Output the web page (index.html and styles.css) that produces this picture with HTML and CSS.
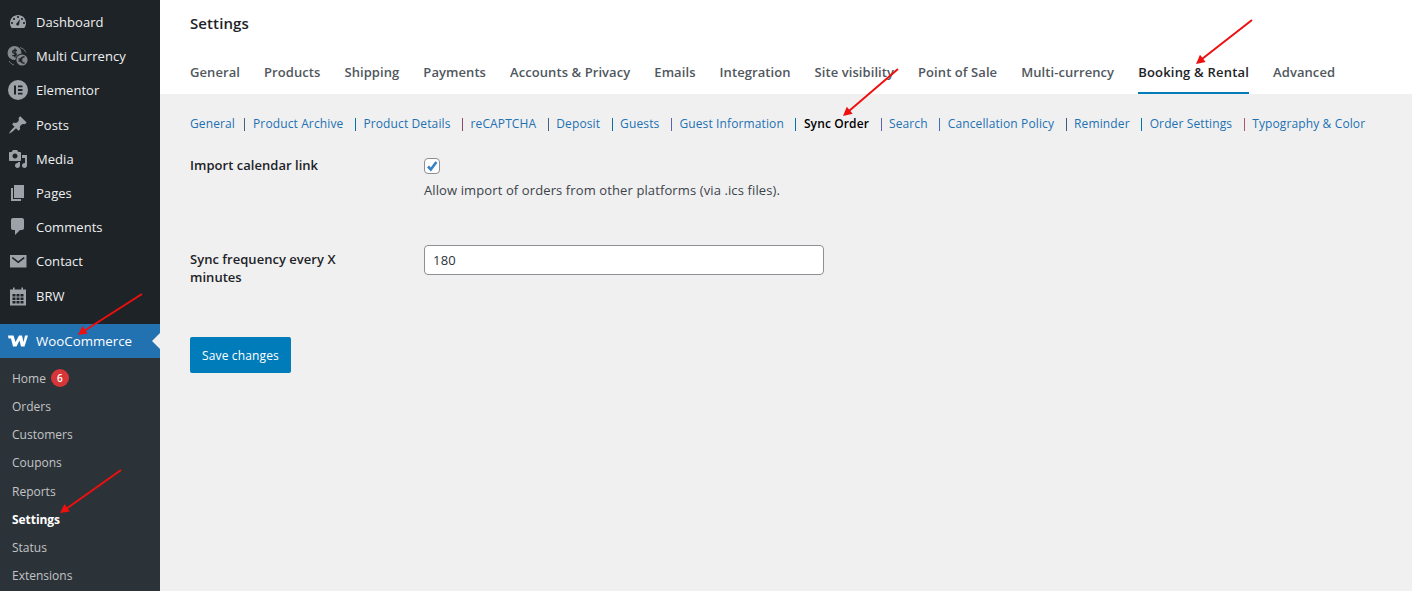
FILE: index.html
```html
<!DOCTYPE html>
<html lang="en">
<head>
<meta charset="utf-8">
<title>Settings</title>
<link rel="stylesheet" href="styles.css">
</head>
<body>
<div class="layout">
  <aside class="sidebar">
    <nav class="menu">
      <a class="item"><span class="ico"><svg width="20" height="20" viewBox="0 0 20 20"><path fill-rule="evenodd" d="M3.76 16h12.48c1.1-1.37 1.76-3.11 1.76-5 0-4.42-3.58-8-8-8s-8 3.58-8 8c0 1.89.66 3.63 1.76 5zM10 4c.55 0 1 .45 1 1s-.45 1-1 1-1-.45-1-1 .45-1 1-1zM6 6c.55 0 1 .45 1 1s-.45 1-1 1-1-.45-1-1 .45-1 1-1zm8 0c.55 0 1 .45 1 1s-.45 1-1 1-1-.45-1-1 .45-1 1-1zm-5.37 5.55L12 7l-.9 5.45c-.21.6-.78 1.05-1.45 1.05-.83 0-1.5-.67-1.5-1.5 0-.43.19-.82.48-1.1zM4 10c.55 0 1 .45 1 1s-.45 1-1 1-1-.45-1-1 .45-1 1-1zm12 0c.55 0 1 .45 1 1s-.45 1-1 1-1-.45-1-1 .45-1 1-1z"/></svg></span>Dashboard</a>
      <a class="item"><span class="ico dim"><svg width="24" height="24" viewBox="0 0 24 24"><circle cx="8.5" cy="9" r="7"/><circle cx="16" cy="16" r="6.6" fill="#1d2327"/><circle cx="16" cy="16" r="5.6"/><path class="cut" d="M9 4.500v9M11 6.500H8a1.300 1.300 0 0 0 0 2.600h1a1.300 1.300 0 0 1 0 2.600H6.300M18.600 13.200a3 3 0 1 0 0 5.600M12.500 15h4M12.500 17h4"/><path class="thin" d="M14 3.500a8 8 0 0 1 6 5M3 17a8 8 0 0 0 5 4"/></svg></span>Multi Currency</a>
      <a class="item"><span class="ico"><svg width="20" height="20" viewBox="0 0 20 20"><path fill-rule="evenodd" d="M10 0a10 10 0 1 0 0 20 10 10 0 0 0 0-20zM6 5.500h2v9H6zM10 5.500h4.500v1.800H10zM10 9.100h4.500v1.800H10zM10 12.700h4.500v1.800H10z"/></svg></span>Elementor</a>
      <a class="item"><span class="ico"><svg width="20" height="20" viewBox="0 0 20 20"><path d="M10.440 3.020l1.820-1.820 6.360 6.350-1.830 1.820c-1.050-.68-2.480-.57-3.410.36l-.75.75c-.92.93-1.040 2.350-.35 3.410l-1.830 1.820-2.410-2.410-2.800 2.790c-.42.42-3.380 2.710-3.800 2.290s1.860-3.390 2.280-3.810l2.790-2.790L4.100 9.360l1.830-1.820c1.050.69 2.480.57 3.400-.36l.75-.75c.93-.92 1.050-2.350.36-3.410z"/></svg></span>Posts</a>
      <a class="item"><span class="ico"><svg width="20" height="20" viewBox="0 0 20 20"><path fill-rule="evenodd" d="M13 11V4c0-.55-.45-1-1-1h-1.670L9 1H5L3.670 3H2c-.55 0-1 .45-1 1v7c0 .55.45 1 1 1h10c.55 0 1-.45 1-1zM7 4.500c1.380 0 2.500 1.120 2.500 2.500S8.380 9.500 7 9.500 4.500 8.380 4.500 7 5.620 4.500 7 4.500zM14 6h5v10.500c0 1.380-1.120 2.500-2.500 2.500S14 17.880 14 16.500s1.120-2.500 2.500-2.500c.17 0 .34.02.5.05V9h-3V6zm-4 8.050V13h2v3.500c0 1.380-1.120 2.500-2.500 2.500S7 17.880 7 16.500 8.120 14 9.500 14c.17 0 .34.02.5.05z"/></svg></span>Media</a>
      <a class="item"><span class="ico"><svg width="20" height="20" viewBox="0 0 20 20"><path d="M6 15V2h10v13H6zm-1 1h8v2H3V5h2v11z"/></svg></span>Pages</a>
      <a class="item"><span class="ico"><svg width="20" height="20" viewBox="0 0 20 20"><path d="M5 1h9c1.100 0 2 .9 2 2v8c0 1.100-.9 2-2 2h-2l-5 5v-5H5c-1.100 0-2-.9-2-2V3c0-1.100.9-2 2-2z"/></svg></span>Comments</a>
      <a class="item"><span class="ico"><svg width="20" height="20" viewBox="0 0 20 20"><path fill-rule="evenodd" d="M2 4h16.500v12.500H2zM3.800 7.300l6.450 5 6.450-5-1-1.300-5.450 4.200L4.800 6z"/></svg></span>Contact</a>
      <a class="item"><span class="ico"><svg width="20" height="20" viewBox="0 0 20 20"><path fill-rule="evenodd" d="M2 3.500h3V1.500h1.600v2h6.800v-2H15v2h3v16H2zM4.500 8h3v2.500h-3zM8.500 8h3v2.500h-3zM12.500 8h3v2.500h-3zM4.500 11.500h3V14h-3zM8.500 11.500h3V14h-3zM12.500 11.500h3V14h-3zM4.500 15h3v2.500h-3zM8.500 15h3v2.500h-3zM12.500 15h3v2.500h-3z"/></svg></span>BRW</a>
      <a class="item current"><span class="ico"><svg width="20" height="12" viewBox="0 0 20 12"><path d="M0 .5h5.500L7.500 7 11 .5h3L15.500 7 17 .5h3L16.500 11.500H13L11.500 5.500 8.500 11.500H5L3 3.500H.5z"/></svg></span>WooCommerce</a>
      <div class="sub">
        <a class="subitem">Home <span class="badge">6</span></a>
        <a class="subitem">Orders</a>
        <a class="subitem">Customers</a>
        <a class="subitem">Coupons</a>
        <a class="subitem">Reports</a>
        <a class="subitem on">Settings</a>
        <a class="subitem">Status</a>
        <a class="subitem">Extensions</a>
      </div>
    </nav>
  </aside>
  <main class="main">
    <header class="top">
      <h1 class="title">Settings</h1>
      <nav class="tabs">
        <a class="tab">General</a>
        <a class="tab">Products</a>
        <a class="tab">Shipping</a>
        <a class="tab">Payments</a>
        <a class="tab">Accounts &amp; Privacy</a>
        <a class="tab">Emails</a>
        <a class="tab">Integration</a>
        <a class="tab">Site visibility</a>
        <a class="tab">Point of Sale</a>
        <a class="tab">Multi-currency</a>
        <a class="tab active">Booking &amp; Rental</a>
        <a class="tab">Advanced</a>
      </nav>
    </header>
    <section class="content">
      <ul class="subtabs">
        <li><a>General</a></li>
        <li><a>Product Archive</a></li>
        <li><a>Product Details</a></li>
        <li><a>reCAPTCHA</a></li>
        <li><a>Deposit</a></li>
        <li><a>Guests</a></li>
        <li><a>Guest Information</a></li>
        <li><a class="cur">Sync Order</a></li>
        <li><a>Search</a></li>
        <li><a>Cancellation Policy</a></li>
        <li><a>Reminder</a></li>
        <li><a>Order Settings</a></li>
        <li><a>Typography &amp; Color</a></li>
      </ul>
      <div class="row first">
        <div class="label">Import calendar link</div>
        <div class="field">
          <span class="check"><svg width="14" height="14" viewBox="0 0 14 14"><path d="M3 7.500l2.800 3 5.600-7.500" fill="none" stroke="#3582c4" stroke-width="2.600"/></svg></span>
          <p class="desc">Allow import of orders from other platforms (via .ics files).</p>
        </div>
      </div>
      <div class="row second">
        <div class="label">Sync frequency every X minutes</div>
        <div class="field"><input class="input" type="text" value="180"></div>
      </div>
      <button class="save" type="button">Save changes</button>
    </section>
  </main>
</div>
<svg class="arrows" width="1412" height="591" viewBox="0 0 1412 591">
  <g stroke="#ee0f0f" stroke-width="2" fill="#ee0f0f">
    <path d="M142 294L84 331"/><path stroke="none" d="M78 335l4.500-9 5 7.500z"/>
    <path d="M121 470L66 509"/><path stroke="none" d="M60 513l4.500-9 5.300 7.500z"/>
    <path d="M898 69L849 111"/><path stroke="none" d="M843 116l3.800-9.300 5.800 7z"/>
    <path d="M1252 20L1202 59"/><path stroke="none" d="M1196 64l4-9.300 5.600 7.200z"/>
  </g>
</svg>
</body>
</html>
```
FILE: styles.css
```css
* { box-sizing: border-box; }
html, body { margin: 0; padding: 0; height: 591px; overflow: hidden; }
body { font-family: "Open Sans", "Noto Sans", sans-serif; font-size: 13px; color: #3c434a; background: #f0f0f1; position: relative; }
a { text-decoration: none; cursor: pointer; }
.layout { display: flex; height: 591px; }
.sidebar { width: 160px; flex: none; background: #1d2327; padding-top: 5px; overflow: hidden; }
.menu { display: flex; flex-direction: column; }
.item { display: flex; align-items: center; height: 34.200px; color: #f0f0f1; font-size: 13px; letter-spacing: 0.05px; position: relative; flex: none; }
.ico { width: 36px; flex: none; display: flex; align-items: center; justify-content: center; fill: #9ca2a7; }
.ico svg { display: block; }
.dim { fill: #85888b; }
.cut { fill: none; stroke: #1d2327; stroke-width: 1.300; }
.thin { fill: none; stroke: #6f7276; stroke-width: 1; }
.current { background: #2271b1; color: #fff; margin-top: 11.200px; height: 34px; font-size: 13.300px; letter-spacing: 0; }
.current .ico { fill: #fff; }
.current::after { content: ""; position: absolute; right: 0; top: 9px; width: 0; height: 0; border: 8px solid transparent; border-right-color: #f0f0f1; border-left-width: 0; }
.sub { background: #2c3338; padding: 6.350px 0; display: flex; flex-direction: column; }
.subitem { height: 28.200px; display: flex; align-items: center; gap: 5px; padding-left: 12px; font-size: 12px; color: #c3c4c7; flex: none; }
.subitem.on { color: #fff; font-weight: 700; letter-spacing: -0.05px; }
.badge { width: 18px; height: 18px; border-radius: 50%; background: #d63638; color: #fff; font-size: 10px; font-weight: 600; display: flex; align-items: center; justify-content: center; }
.main { flex: 1; display: flex; flex-direction: column; min-width: 0; }
.top { background: #fff; height: 94px; padding: 0 0 0 30px; display: flex; flex-direction: column; }
.title { margin: 0; padding-top: 12px; font-size: 15px; line-height: 22px; font-weight: 600; letter-spacing: 0.1px; color: #1d2327; height: 54px; }
.tabs { display: flex; gap: 24px; }
.tab { height: 40px; line-height: 36px; font-size: 13px; font-weight: 600; letter-spacing: 0.075px; color: #50575e; border-bottom: 2px solid transparent; white-space: nowrap; }
.tab.active { color: #1d2327; border-bottom-color: #007cba; letter-spacing: 0.2px; }
.content { padding: 0 30px; }
.subtabs { list-style: none; margin: 0; padding: 21px 0 0; display: flex; font-size: 12px; line-height: 18px; white-space: nowrap; letter-spacing: 0.120px; }
.subtabs li { display: flex; align-items: center; }
.subtabs li + li::before { content: ""; width: 1px; height: 13px; margin: 0 7.500px 0 11.500px; background: #0073aa; }
.subtabs li:nth-child(2)::before { margin: 0 8.500px 0 8.500px; background: #47607f; }
.subtabs li:nth-child(4)::before { background: #8d4a66; }
.subtabs li:nth-child(5)::before { background: #47607f; }
.subtabs li:nth-child(7)::before, .subtabs li:nth-child(9)::before { background: #5d62b5; }
.subtabs li:nth-child(10)::before { background: #3d6fb5; }
.subtabs li:nth-child(11)::before { background: #3c5a7e; }
.subtabs li:nth-child(13)::before { background: #b0556f; }
.subtabs a { color: #2271b1; }
.subtabs a.cur { color: #000; font-weight: 600; }
.row { display: grid; grid-template-columns: 234px 400px; }
.first { margin-top: 24px; height: 80px; }
.second { margin-top: 8px; height: 92px; }
.label { font-weight: 600; color: #1d2327; line-height: 18px; width: 175px; letter-spacing: 0.03px; }
.first .label { margin-top: -1px; }
.second .label { margin-top: 5px; }
.check { display: flex; align-items: center; justify-content: center; width: 16px; height: 16px; background: #fff; border: 1px solid #8c8f94; border-radius: 4px; margin-top: 1px; }
.desc { margin: 7px 0 0; line-height: 18px; color: #3c434a; letter-spacing: 0.110px; }
.input { display: block; width: 400px; height: 30px; padding: 0 8px; border: 1px solid #8c8f94; border-radius: 4px; background: #fff; font: 13px "Open Sans", sans-serif; letter-spacing: 0.2px; color: #2c3338; }
.save { display: block; width: 101px; height: 36px; padding: 0; background: #007cba; color: #fff; border: 0; border-radius: 2px; font: 12px "Open Sans", sans-serif; letter-spacing: 0.150px; }
.arrows { position: absolute; left: 0; top: 0; pointer-events: none; }
```
